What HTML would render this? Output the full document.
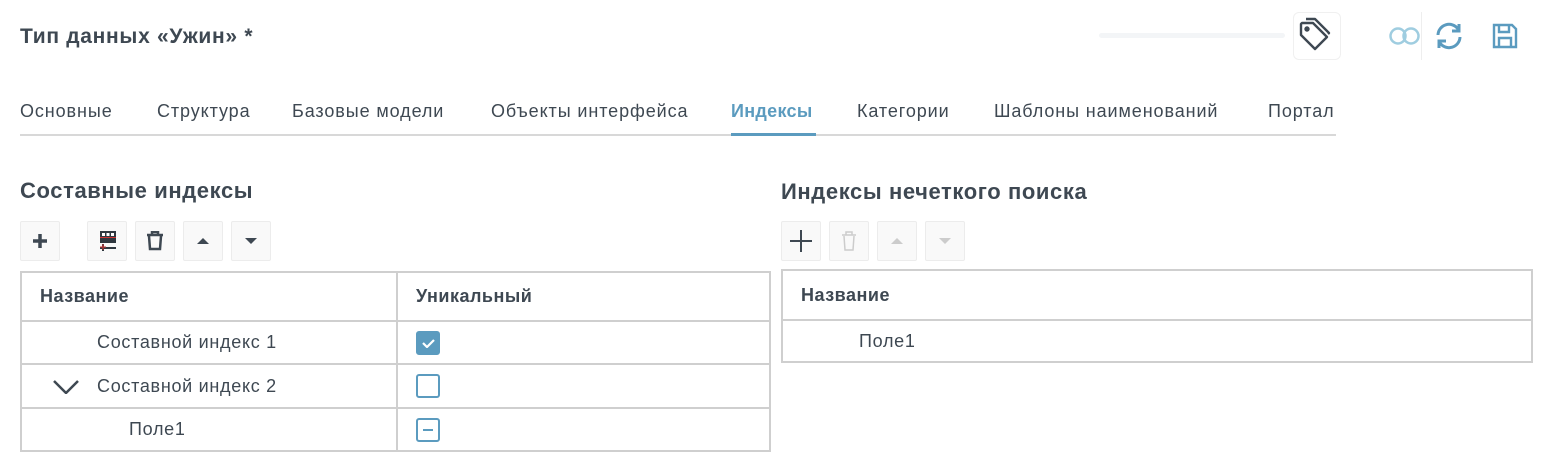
<!DOCTYPE html><html><head><meta charset="utf-8"><style>
*{box-sizing:border-box;margin:0;padding:0}
body{width:1544px;height:468px;background:#fff;font-family:"Liberation Sans",sans-serif;color:#3e4852;position:relative;overflow:hidden}
.a{position:absolute}
.title{left:20px;top:25px;font-size:21px;letter-spacing:0.7px;font-weight:bold;color:#3e4852}
.tab{top:101px;font-size:18px;letter-spacing:0.9px;color:#3e4852}
.h2{font-size:22px;letter-spacing:0.6px;font-weight:bold;color:#3e4852}
.btn{width:40px;height:40px;border:1px solid #ececec;background:#f9f9f9;border-radius:2px;display:flex;align-items:center;justify-content:center}
table{border-collapse:collapse;position:absolute}
td{border:2px solid #cfcfcf;font-size:18px;letter-spacing:0.7px;color:#3e4852}
.cb{width:24px;height:24px;border:2px solid #5b9bbf;border-radius:3px;display:inline-block;vertical-align:middle;position:relative}
</style></head><body>
<div class="a title">Тип данных «Ужин» *</div>
<div class="a" style="left:1099px;top:33px;width:186px;height:5px;background:#f3f5f7;border-radius:3px"></div>
<div class="a" style="left:1293px;top:12px;width:48px;height:48px;border:1px solid #f0f0f0;border-radius:6px"></div>
<svg class="a" style="left:1298px;top:14px" width="40" height="44" viewBox="0 0 40 44" fill="none" stroke="#3e4852" stroke-width="2.4" stroke-linejoin="round"><path d="M3 10v11l14 14 12-12L15 9H4z"/><path d="M8 5h9l14 14-1 1"/><circle cx="9" cy="15" r="1.5" fill="#3e4852"/></svg>
<svg class="a" style="left:1388px;top:26px" width="34" height="20" fill="none" stroke="#9fcde0" stroke-width="2.5"><circle cx="10" cy="10" r="7.5"/><circle cx="23" cy="10" r="7.5"/></svg>
<div class="a" style="left:1421px;top:12px;width:1px;height:48px;background:#eee"></div>
<svg class="a" style="left:1434px;top:22px" width="30" height="28" viewBox="0 0 30 28" fill="none" stroke="#5b9bbf" stroke-width="3"><path d="M4 13A11 11 0 0 1 24 7"/><path d="M26 15A11 11 0 0 1 6 21"/><path d="M25 2v7h-7" /><path d="M5 26v-7h7"/></svg>
<svg class="a" style="left:1492px;top:23px" width="26" height="26" viewBox="0 0 26 26" fill="none" stroke="#5b9bbf" stroke-width="2.4"><path d="M2 2h18l4 4v18H2z"/><path d="M7 2v7h10V2"/><path d="M7 24v-9h12v9"/></svg>
<div class="a tab" style="left:20px">Основные</div>
<div class="a tab" style="left:157px">Структура</div>
<div class="a tab" style="left:292px">Базовые модели</div>
<div class="a tab" style="left:491px">Объекты интерфейса</div>
<div class="a tab" style="left:731px;color:#5b9bbf;font-weight:bold;letter-spacing:0.3px">Индексы</div>
<div class="a tab" style="left:857px">Категории</div>
<div class="a tab" style="left:994px">Шаблоны наименований</div>
<div class="a tab" style="left:1268px">Портал</div>
<div class="a" style="left:20px;top:134px;width:1316px;height:2px;background:#d8d8d8"></div>
<div class="a" style="left:731px;top:133px;width:85px;height:3px;background:#5b9bbf"></div>
<div class="a h2" style="left:20px;top:178px">Составные индексы</div>
<div class="a h2" style="left:781px;top:179px">Индексы нечеткого поиска</div>
<div class="a btn" style="left:20px;top:221px"><svg width="16" height="16"><path d="M8 1v14M1 8h14" stroke="#3e4852" stroke-width="3.5"/></svg></div>
<div class="a btn" style="left:87px;top:221px"><svg width="20" height="22" viewBox="0 0 20 22"><rect x="3" y="1" width="16" height="12" fill="#2f3840"/><rect x="5" y="3" width="3" height="3" fill="#fff"/><rect x="9.5" y="3" width="3" height="3" fill="#fff"/><rect x="14" y="3" width="3" height="3" fill="#fff"/><rect x="3" y="7" width="16" height="1" fill="#c33"/><path d="M3 18h16M6 14v7M3 17.5h6" stroke="#2f3840" stroke-width="2" fill="none"/><path d="M3 17h6M6 14v6" stroke="#c33" stroke-width="1"/></svg></div>
<div class="a btn" style="left:135px;top:221px"><svg width="18" height="20" viewBox="0 0 18 20" fill="none" stroke="#3e4852" stroke-width="2.5"><path d="M1 4h16M6 4V1h6v3M3 5l1 13h10l1-13"/></svg></div>
<div class="a btn" style="left:183px;top:221px"><svg width="12" height="8"><path d="M0 7L6 1 12 7z" fill="#3e4852"/></svg></div>
<div class="a btn" style="left:231px;top:221px"><svg width="12" height="8"><path d="M0 1L6 7 12 1z" fill="#3e4852"/></svg></div>
<div class="a btn" style="left:781px;top:221px"><svg width="22" height="22"><path d="M11 0v22M0 11h22" stroke="#3e4852" stroke-width="2"/></svg></div>
<div class="a btn" style="left:829px;top:221px"><svg width="16" height="20" viewBox="0 0 16 20" fill="none" stroke="#ccc" stroke-width="1.5"><path d="M1 4h14M5 4V1h6v3M3 5l1 14h8l1-14"/></svg></div>
<div class="a btn" style="left:877px;top:221px"><svg width="12" height="8"><path d="M0 7L6 1 12 7z" fill="#ccc"/></svg></div>
<div class="a btn" style="left:925px;top:221px"><svg width="12" height="8"><path d="M0 1L6 7 12 1z" fill="#ccc"/></svg></div>
<table style="left:20px;top:271px;width:751px">
<tr style="height:49px"><td style="width:376px;padding-left:18px;font-weight:bold;letter-spacing:0.5px">Название</td><td style="padding-left:18px;font-weight:bold;letter-spacing:0.5px">Уникальный</td></tr>
<tr style="height:43px"><td style="padding-left:75px">Составной индекс 1</td><td style="padding-left:18px"><span class="cb" style="background:#5b9bbf"><svg style="position:absolute;left:4px;top:5px" width="13" height="10"><path d="M1 5l4 4 7-7" stroke="#fff" stroke-width="2.2" fill="none"/></svg></span></td></tr>
<tr style="height:44px"><td style="padding-left:31px"><svg width="26" height="14" style="vertical-align:middle;margin-right:18px"><path d="M1 1l12 12 12-12" stroke="#3e4852" stroke-width="2.5" fill="none"/></svg>Составной индекс 2</td><td style="padding-left:18px"><span class="cb"></span></td></tr>
<tr style="height:43px"><td style="padding-left:107px">Поле1</td><td style="padding-left:18px"><span class="cb"><span style="position:absolute;left:5px;top:9px;width:10px;height:2px;background:#5b9bbf"></span></span></td></tr>
</table>
<table style="left:781px;top:269px;width:752px">
<tr style="height:50px"><td style="padding-left:18px;font-weight:bold;letter-spacing:0.5px">Название</td></tr>
<tr style="height:42px"><td style="padding-left:76px">Поле1</td></tr>
</table>
</body></html>
